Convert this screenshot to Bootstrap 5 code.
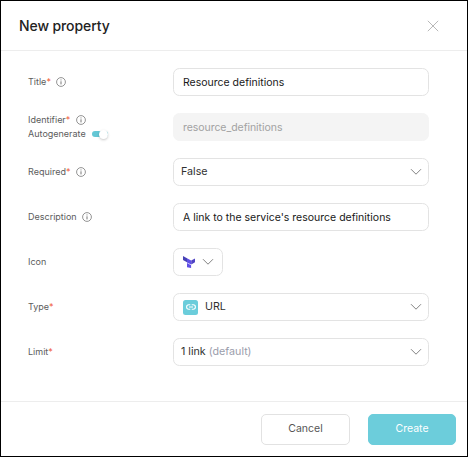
<!DOCTYPE html>
<html lang="en">
<head>
<meta charset="utf-8">
<meta name="viewport" content="width=device-width, initial-scale=1">
<title>New property</title>
<link href="https://cdn.jsdelivr.net/npm/bootstrap@5.3.0/dist/css/bootstrap.min.css" rel="stylesheet">
<style>
html, body { height: 100%; }
body { font-family: Inter, "Liberation Sans", sans-serif; font-size: 10.5px; line-height: 14px; color: #222; overflow: hidden; }
.dialog { height: 457px; border: 1px solid #000; background: #fff; }
.dialog-head { height: 50px; padding: 0 28px 0 18px; border-bottom: 1px solid #ededed; }
.dialog-title { font-size: 14px; font-weight: 500; line-height: 20px; letter-spacing: -.1px; color: #222; }
.dialog-head .btn { line-height: 0; }
.dialog-body { padding: 17px 38px 0 27px; gap: 17px; }
.field-row { height: 28px; }
.field-label { width: 145px; font-size: 9px; line-height: 14px; color: #5c5c5c; }
.field-label svg { margin-left: 5.5px; }
.req { color: #f05a38; }
.form-box.form-control { height: 28px; padding: 0 9px; border: 1px solid #e3e3e3; border-radius: 6.5px; font-size: 10.5px; line-height: 14px; color: #181818; }
.form-box.form-control:disabled { background: #f4f4f4; border-color: #f4f4f4; color: #a2a2a2; letter-spacing: -.05px; }
.form-box.pick { padding: 0 6px 0 7px; color: #303030; }
.form-box.pick .value { font-size: 10.7px; }
.form-box.icon-pick { width: 50px; padding: 0 8px 0 9px; }
.hint { color: #9a9dab; }
.url-tile { width: 15px; height: 15px; border-radius: 2.5px; background: #6bcddb; margin-left: 2px; margin-right: 7px; }
.toggle { width: 16px; height: 6px; border-radius: 3px; background: #64c7d5; margin-left: 6px; }
.toggle span { width: 9px; height: 9px; border-radius: 50%; background: #fff; box-shadow: 0 1px 2.5px rgba(0,0,0,.22); }
.dialog-foot { height: 55px; padding: 0 11px 0 0; border-top: 1px solid #ededed; gap: 18px; }
.dialog-foot .btn { width: 89px; height: 31px; padding: 0; border-radius: 5px; font-size: 10.5px; line-height: 14px; }
.dialog-foot .btn-plain { border: 1px solid #e2e2e2; color: #555; background: #fff; }
.dialog-foot .btn-main { width: 88px; background: #6ccddb; border: 1px solid #6ccddb; color: #fff; }
</style>
</head>
<body>
<svg width="0" height="0" class="position-absolute" aria-hidden="true">
  <symbol id="info" viewBox="0 0 10 10"><circle cx="5" cy="5" r="4.4" fill="none" stroke="#707070" stroke-width=".75"/><path d="M5 4.3V7.4M5 2.5V3.4" stroke="#606060" stroke-width=".85"/></symbol>
  <symbol id="chev" viewBox="0 0 12 8"><path d="M1 1.2L6 6.2L11 1.2" fill="none" stroke="#747474" stroke-width=".9"/></symbol>
</svg>
<div class="dialog d-flex flex-column">
  <header class="dialog-head d-flex align-items-center justify-content-between flex-shrink-0">
    <h1 class="dialog-title mb-0">New property</h1>
    <button class="btn p-0 border-0" aria-label="Close"><svg width="12" height="12" viewBox="0 0 12 12"><path d="M.8 .8L11.2 11.2M11.2 .8L.8 11.2" stroke="#b0b0b0" stroke-width=".9"/></svg></button>
  </header>
  <main class="dialog-body d-flex flex-column flex-grow-1">
    <div class="field-row d-flex align-items-center">
      <label class="field-label d-flex align-items-center flex-shrink-0">Title<span class="req">*</span><svg width="10" height="10"><use href="#info"/></svg></label>
      <input class="form-control form-box" value="Resource definitions">
    </div>
    <div class="field-row d-flex align-items-center">
      <div class="field-label flex-shrink-0">
        <div class="d-flex align-items-center">Identifier<span class="req">*</span><svg width="10" height="10"><use href="#info"/></svg></div>
        <div class="d-flex align-items-center">Autogenerate<span class="toggle d-flex align-items-center justify-content-end"><span></span></span></div>
      </div>
      <input class="form-control form-box" value="resource_definitions" disabled>
    </div>
    <div class="field-row d-flex align-items-center">
      <label class="field-label d-flex align-items-center flex-shrink-0">Required<span class="req">*</span><svg width="10" height="10"><use href="#info"/></svg></label>
      <div class="form-control form-box pick d-flex align-items-center justify-content-between"><span class="value">False</span><svg width="12" height="8"><use href="#chev"/></svg></div>
    </div>
    <div class="field-row d-flex align-items-center">
      <label class="field-label d-flex align-items-center flex-shrink-0">Description<svg width="10" height="10"><use href="#info"/></svg></label>
      <input class="form-control form-box" value="A link to the service's resource definitions">
    </div>
    <div class="field-row d-flex align-items-center">
      <label class="field-label flex-shrink-0">Icon</label>
      <div class="form-control form-box icon-pick d-flex align-items-center justify-content-between">
        <svg width="12" height="12" viewBox="0 0 12 12"><path d="M0 0L4 2.2V6.2L0 4Z" fill="#4742b5"/><path d="M4 2.3L8.1 4.6V8.6L4 6.4ZM4 7L8.1 9.2V12L4 11.2Z" fill="#5f4fe6"/><path d="M12.2 2.3L8.2 4.6V8.4L12.2 6.2Z" fill="#4f42c4"/></svg>
        <svg width="12" height="8"><use href="#chev"/></svg>
      </div>
    </div>
    <div class="field-row d-flex align-items-center">
      <label class="field-label flex-shrink-0">Type<span class="req">*</span></label>
      <div class="form-control form-box pick d-flex align-items-center">
        <span class="url-tile d-flex align-items-center justify-content-center"><svg width="10" height="6" viewBox="0 0 10 6" fill="none" stroke="#fff" stroke-width="1.1"><path d="M4.3 .8H2.8a2.2 2.2 0 0 0 0 4.4H4.3M5.7 .8H7.2a2.2 2.2 0 0 1 0 4.4H5.7M3 3H7"/></svg></span>
        <span class="value me-auto">URL</span><svg width="12" height="8"><use href="#chev"/></svg>
      </div>
    </div>
    <div class="field-row d-flex align-items-center">
      <label class="field-label flex-shrink-0">Limit<span class="req">*</span></label>
      <div class="form-control form-box pick d-flex align-items-center justify-content-between"><span class="value">1 link <span class="hint">(default)</span></span><svg width="12" height="8"><use href="#chev"/></svg></div>
    </div>
  </main>
  <footer class="dialog-foot d-flex align-items-center justify-content-end flex-shrink-0">
    <button class="btn btn-plain">Cancel</button>
    <button class="btn btn-main">Create</button>
  </footer>
</div>
<script src="https://cdn.jsdelivr.net/npm/bootstrap@5.3.0/dist/js/bootstrap.bundle.min.js"></script>
</body>
</html>
